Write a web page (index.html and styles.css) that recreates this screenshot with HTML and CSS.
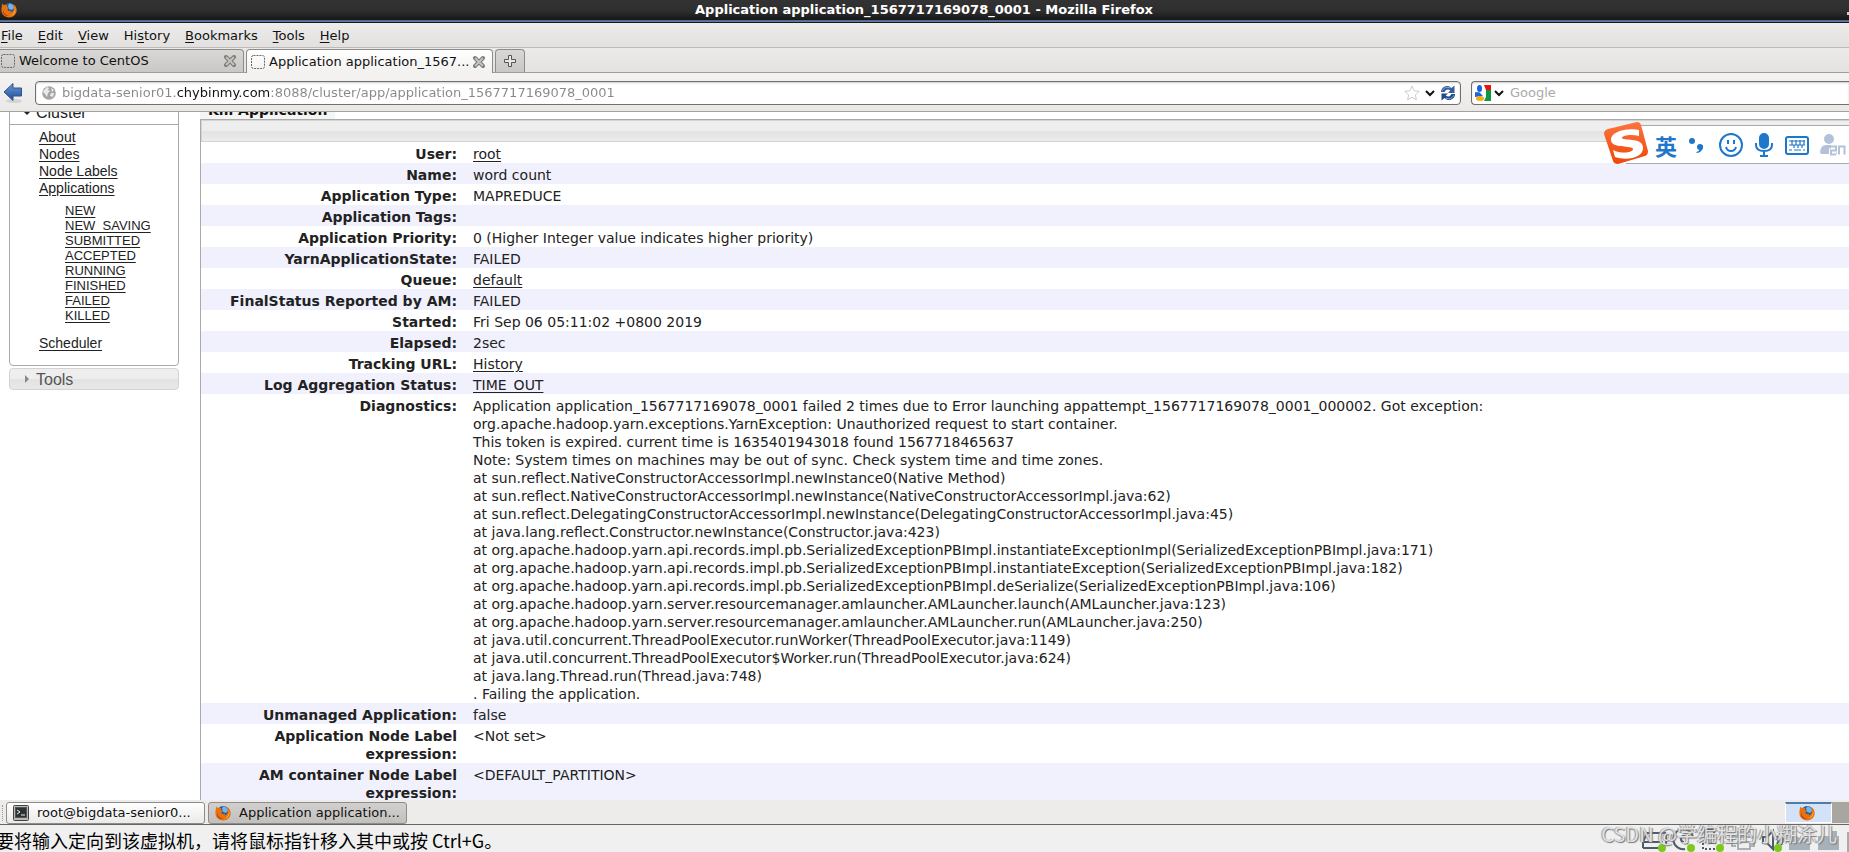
FILE: index.html
```html
<!DOCTYPE html>
<html lang="en">
<head>
<meta charset="utf-8">
<title>Application application_1567717169078_0001</title>
<link rel="stylesheet" href="styles.css">
</head>
<body>
<svg class="defs" aria-hidden="true">
  <defs>
    <linearGradient id="blueArrow" x1="0" y1="0" x2="0" y2="1"><stop offset="0" stop-color="#6c9bd2"/><stop offset="1" stop-color="#1f4b90"/></linearGradient>
    <linearGradient id="orange" x1="0" y1="0" x2="0" y2="1"><stop offset="0" stop-color="#fb7440"/><stop offset="1" stop-color="#f04708"/></linearGradient>
    <symbol id="fox" viewBox="0 0 16 16">
      <circle cx="8.2" cy="7.6" r="6.6" fill="#27599f"/>
      <path d="M8 1.500c3 0 5 2 5 4.500l-2 2-3-1-1-3z" fill="#6cb6e8"/>
      <path d="M1.200 1.500 3 3.300C4 2.600 5.400 2.700 6.400 3L5.800 5l2.400.8-1.800 1.400c.2 1.600 1.800 2.200 3.200 1.500 1 .1 1 .9-.6 1.600 2.400.2 4-1.500 4-4.300L11.500 2c2.700 1 4.300 3.200 4.200 6.300-.2 4.200-3.400 7.200-7.600 7.200C3.600 15.500.4 12.400.4 8.100c0-2.500.6-4.400.8-6.600z" fill="#e8700f"/>
      <path d="M13.400 4.600c1.400 3.900-.3 8-4.500 8.900 4.500.1 6.800-4.300 4.500-8.900z" fill="#ffcf3a"/>
      <path d="M2 8c.7 3.500 3 5.500 6 5.800C4 14.500 1.500 11.500 2 8z" fill="#b9330d"/>
    </symbol>
    <symbol id="page" viewBox="0 0 16 16"><rect x="1.500" y="1.500" width="13" height="13" rx="2" fill="none" stroke="#666" stroke-dasharray="2 1"/></symbol>
    <symbol id="cross" viewBox="0 0 14 14"><path d="M3 3l8 8M11 3l-8 8" stroke="#777873" stroke-width="4" stroke-linecap="round"/><path d="M3 3l8 8M11 3l-8 8" stroke="#c4c5c1" stroke-width="2"/></symbol>
    <symbol id="chev" viewBox="0 0 12 8"><path d="M2 2l4 4 4-4" fill="none" stroke="#111" stroke-width="2"/></symbol>
  </defs>
</svg>

<header class="titlebar">
  <svg class="i16"><use href="#fox"/></svg>
  <h1>Application application_1567717169078_0001 - Mozilla Firefox</h1>
  <button class="minimize" aria-label="Minimize"></button>
</header>

<nav class="menubar" aria-label="Menu">
  <button><u>F</u>ile</button><button><u>E</u>dit</button><button><u>V</u>iew</button><button>Hi<u>s</u>tory</button><button><u>B</u>ookmarks</button><button><u>T</u>ools</button><button><u>H</u>elp</button>
</nav>

<div class="tabs">
  <div class="tab"><svg class="i16"><use href="#page"/></svg><button class="tab-name">Welcome to CentOS</button><button class="close" aria-label="Close Welcome to CentOS"><svg class="i14"><use href="#cross"/></svg></button></div>
  <div class="tab tab-active"><svg class="i16"><use href="#page"/></svg><button class="tab-name">Application application_1567...</button><button class="close" aria-label="Close Application"><svg class="i14"><use href="#cross"/></svg></button></div>
  <button class="new-tab" aria-label="New tab"><svg class="i14" viewBox="0 0 14 14"><path d="M5.500 1.500h3v4h4v3h-4v4h-3v-4h-4v-3h4z" fill="#e8e8e6" stroke="#555"/></svg></button>
</div>

<div class="navbar">
  <button class="back" aria-label="Back"><svg viewBox="0 0 20 22"><ellipse cx="11" cy="19" rx="8" ry="2" fill="#d4d4d2"/><path d="M1 10 10 1.500V6h8.500v8H10v4.500z" fill="url(#blueArrow)" stroke="#2a5594"/></svg></button>
  <div class="field address">
    <svg class="i14" viewBox="0 0 14 14"><circle cx="7" cy="7" r="6.800" fill="#a5a5a5"/><path d="M2 4l3-3 2 1-1 2 2 1-2 2-1 4-2-3-2-2zM9 2l3 2-2 2zM9 7l3 0-1 4-3-1z" fill="#e9e9e9"/></svg>
    <input class="url" aria-label="Address" value="bigdata-senior01.chybinmy.com:8088/cluster/app/application_1567717169078_0001">
    <button aria-label="Bookmark"><svg class="i16" viewBox="0 0 16 16"><path d="M8 1l2.100 4.700 5.100.6-3.800 3.500 1 5L8 12.300l-4.400 2.500 1-5L.8 6.300l5.100-.6z" fill="#fff" stroke="#ccc"/></svg></button>
    <button aria-label="History"><svg class="chev"><use href="#chev"/></svg></button>
    <button aria-label="Reload"><svg class="i16" viewBox="0 0 16 16"><path d="M1 7C1 3 5 0 9 1.200L11.500 3 14.500.5V8H8l2.300-2.500C8 3.500 5.500 4.500 4.600 7z" fill="#355f9f"/><path d="M15 9c0 4-4 7-8 5.800L4.500 13l-3 2.500V8.500H8L5.700 10.500c2.300 2 4.800 1 5.700-1.500z" fill="#204a87"/><path d="M2.500 5.500C4 2.500 7 1.500 10 3M13.500 10.500c-1.500 3-4.500 4-7.500 2.500" fill="none" stroke="#8db0df"/></svg></button>
  </div>
  <div class="field search">
    <button aria-label="Search engine"><svg class="i16" viewBox="0 0 16 16"><path d="M9 0h7v5h-5z" fill="#e11"/><path d="M11 5h5v11H9l2-4z" fill="#109545"/><ellipse cx="4.500" cy="3.500" rx="2.500" ry="3.500" fill="#1765d8"/><path d="M0 7c3 1 4-1 6 2l2 2-8 1z" fill="#1765d8"/><ellipse cx="5" cy="13.500" rx="4" ry="2.500" fill="#f2af14"/></svg></button>
    <svg class="chev"><use href="#chev"/></svg>
    <input aria-label="Search" placeholder="Google">
  </div>
</div>

<main class="page">
  <aside class="sidebar">
    <section class="panel">
      <h3><svg class="tri" viewBox="0 0 8 8"><path d="M0 2h8L4 6z" fill="#222"/></svg>Cluster</h3>
      <ul>
        <li><a href="#">About</a></li>
        <li><a href="#">Nodes</a></li>
        <li><a href="#">Node Labels</a></li>
        <li><a href="#">Applications</a>
          <ul>
            <li><a href="#">NEW</a></li>
            <li><a href="#">NEW_SAVING</a></li>
            <li><a href="#">SUBMITTED</a></li>
            <li><a href="#">ACCEPTED</a></li>
            <li><a href="#">RUNNING</a></li>
            <li><a href="#">FINISHED</a></li>
            <li><a href="#">FAILED</a></li>
            <li><a href="#">KILLED</a></li>
          </ul>
        </li>
        <li><a href="#">Scheduler</a></li>
      </ul>
    </section>
    <h3 class="closed"><svg class="tri" viewBox="0 0 8 8"><path d="M2 0v8l4-4z" fill="#888"/></svg>Tools</h3>
  </aside>
  <div class="content">
    <button class="kill">Kill Application</button>
    <div class="info">
      <div class="info-head"></div>
      <table>
        <tr><th scope="row">User:</th><td><a href="#">root</a></td></tr>
        <tr><th scope="row">Name:</th><td>word count</td></tr>
        <tr><th scope="row">Application Type:</th><td>MAPREDUCE</td></tr>
        <tr><th scope="row">Application Tags:</th><td></td></tr>
        <tr><th scope="row">Application Priority:</th><td>0 (Higher Integer value indicates higher priority)</td></tr>
        <tr><th scope="row">YarnApplicationState:</th><td>FAILED</td></tr>
        <tr><th scope="row">Queue:</th><td><a href="#">default</a></td></tr>
        <tr><th scope="row">FinalStatus Reported by AM:</th><td>FAILED</td></tr>
        <tr><th scope="row">Started:</th><td>Fri Sep 06 05:11:02 +0800 2019</td></tr>
        <tr><th scope="row">Elapsed:</th><td>2sec</td></tr>
        <tr><th scope="row">Tracking URL:</th><td><a href="#">History</a></td></tr>
        <tr><th scope="row">Log Aggregation Status:</th><td><a href="#">TIME_OUT</a></td></tr>
        <tr><th scope="row">Diagnostics:</th><td>Application application_1567717169078_0001 failed 2 times due to Error launching appattempt_1567717169078_0001_000002. Got exception:<br>org.apache.hadoop.yarn.exceptions.YarnException: Unauthorized request to start container.<br>This token is expired. current time is 1635401943018 found 1567718465637<br>Note: System times on machines may be out of sync. Check system time and time zones.<br>at sun.reflect.NativeConstructorAccessorImpl.newInstance0(Native Method)<br>at sun.reflect.NativeConstructorAccessorImpl.newInstance(NativeConstructorAccessorImpl.java:62)<br>at sun.reflect.DelegatingConstructorAccessorImpl.newInstance(DelegatingConstructorAccessorImpl.java:45)<br>at java.lang.reflect.Constructor.newInstance(Constructor.java:423)<br>at org.apache.hadoop.yarn.api.records.impl.pb.SerializedExceptionPBImpl.instantiateExceptionImpl(SerializedExceptionPBImpl.java:171)<br>at org.apache.hadoop.yarn.api.records.impl.pb.SerializedExceptionPBImpl.instantiateException(SerializedExceptionPBImpl.java:182)<br>at org.apache.hadoop.yarn.api.records.impl.pb.SerializedExceptionPBImpl.deSerialize(SerializedExceptionPBImpl.java:106)<br>at org.apache.hadoop.yarn.server.resourcemanager.amlauncher.AMLauncher.launch(AMLauncher.java:123)<br>at org.apache.hadoop.yarn.server.resourcemanager.amlauncher.AMLauncher.run(AMLauncher.java:250)<br>at java.util.concurrent.ThreadPoolExecutor.runWorker(ThreadPoolExecutor.java:1149)<br>at java.util.concurrent.ThreadPoolExecutor$Worker.run(ThreadPoolExecutor.java:624)<br>at java.lang.Thread.run(Thread.java:748)<br>. Failing the application.</td></tr>
        <tr><th scope="row">Unmanaged Application:</th><td>false</td></tr>
        <tr><th scope="row">Application Node Label expression:</th><td>&lt;Not set&gt;</td></tr>
        <tr><th scope="row">AM container Node Label expression:</th><td>&lt;DEFAULT_PARTITION&gt;</td></tr>
      </table>
    </div>
  </div>
</main>

<footer class="taskbar">
  <span class="grip"></span>
  <button class="task"><svg class="i16" viewBox="0 0 16 16"><rect x=".5" y=".5" width="15" height="15" rx="1" fill="#babdb6" stroke="#444"/><rect x="2.500" y="2.500" width="11" height="10" fill="#2e3436" stroke="#555"/><path d="M4 5l3 2-3 2M8 10h4" fill="none" stroke="#eee"/></svg>root@bigdata-senior0...</button>
  <button class="task task-active"><svg class="i16"><use href="#fox"/></svg>Application application...</button>
  <div class="pager"><button class="desk desk-on" aria-label="Workspace 1"><svg class="i16"><use href="#fox"/></svg></button><button class="desk" aria-label="Workspace 2"></button></div>
</footer>

<div class="status">
  <p>要将输入定向到该虚拟机，请将鼠标指针移入其中或按 Ctrl+G。</p>
  <svg class="devices" viewBox="0 0 208 24" fill="none" stroke="#4c5c69" stroke-width="2">
    <path d="M5 5h20M2 20V14l4-9M2 14h20M2 20h16M25 5v12"/>
    <path d="M52 9A10 10 0 1 0 44 21M46 11a3 3 0 1 0-3 3"/>
    <path d="M64 2h9v9h-9zM69 11v4h6" /><path d="M62 11v10h14" stroke-dasharray="2 2"/>
    <path d="M97 9V4h12v5M95 18h-4V9h22v9h-4M97 14h12v7H97z" stroke="#a8b1b9"/>
    <path d="M122 9h4l6-6v18l-6-6h-4zM136 8q3 4 0 8M140 5q4 6 0 12"/>
    <path d="M148 8h8l2 2h11v12h-21zM177 8h14V3h5v5h2v14h-21z" fill="#a8b1b9" stroke="none"/>
    <path d="M207 4v20" stroke="#aaa"/>
    <g fill="#7ec81c" stroke="none"><circle cx="21" cy="20" r="4"/><circle cx="50" cy="20" r="4"/><circle cx="79" cy="20" r="4"/><circle cx="137" cy="20" r="4"/></g>
  </svg>
  <span class="watermark">CSDN @学编程的小糊涂儿</span>
</div>

<div class="ime">
  <svg class="ime-logo" viewBox="0 0 44 42"><path d="M4 7 33 0q3 0 4 3l7 26q0 4-3 5L14 42q-4 0-5-3L0 12q0-4 4-5z" fill="url(#orange)"/><path d="M35 8C27 6 7 8 7 18c0 9 22 5 22 9 0 4-12 5-20 1l2 7c12 4 29 1 28-10-1-10-21-6-21-9 0-3 10-4 17-2z" fill="#fff"/></svg>
  <span class="ime-lang">英</span>
  <svg class="i24" viewBox="0 0 24 24" fill="#1f77cb"><circle cx="6" cy="8" r="3"/><circle cx="14" cy="14" r="3"/><path d="M14.500 12q4-.5 2 4-2 4-6 4v-1q3-1 4-4z"/></svg>
  <svg class="i24" viewBox="0 0 24 24" fill="none" stroke="#1f77cb" stroke-width="2"><circle cx="12" cy="12" r="11"/><path d="M7 14q1 4 5 4t5-4M9 7v4M15 7v4"/></svg>
  <svg class="i24" viewBox="0 0 24 24" fill="none" stroke="#1f77cb" stroke-width="2"><rect x="8" y="1" width="8" height="14" rx="4" fill="#1f77cb"/><path d="M4 10v2q0 6 8 6t8-6v-2M12 18v5M8 23h8"/></svg>
  <svg class="i24" viewBox="0 0 24 24" fill="none" stroke="#1f77cb" stroke-width="2"><rect x="1" y="4" width="22" height="17" rx="2"/><path d="M4 8h16M4 12h16M4 17h3M9 17h7M18 17h2M7 7v5M11 7v5M15 7v5M19 7v5M9 12v3M13 12v3M17 12v3" stroke-width="1.200"/></svg>
  <svg class="i26" viewBox="0 0 26 24"><circle cx="9" cy="6" r="5" fill="#b3c1d9"/><path d="M0 19q1-8 7-7h7q3 1 3 9H3q-3 0-3-2z" fill="#b3c1d9"/><path d="M11 13.500h5v4h-5v4h5M19 21.500v-8h2M24 22v-8.500M18 21.500h4" fill="none" stroke="#fff" stroke-width="4"/><path d="M11 13.500h5v4h-5v4h5M19 21.500v-8h5.500v8" fill="none" stroke="#b3c1d9" stroke-width="2"/></svg>
</div>
</body>
</html>
```
FILE: styles.css
```css
* { box-sizing: border-box; }
html, body { height: 100%; margin: 0; }
body {
  display: flex;
  flex-direction: column;
  position: relative;
  overflow: hidden;
  background: #fff;
  color: #222;
  font: 13px/18px "DejaVu Sans", sans-serif;
}
button { margin: 0; padding: 0; border: 0; background: none; font: inherit; color: inherit; }
input { min-width: 0; padding: 0; border: 0; outline: 0; background: none; font: inherit; }
ul { margin: 0; padding: 0; list-style: none; }
a { color: inherit; text-underline-offset: 2px; }
svg { display: block; flex: none; }
.defs { position: absolute; width: 0; height: 0; }
.i14 { width: 14px; height: 14px; }
.i16 { width: 16px; height: 16px; }
.i24 { width: 24px; height: 24px; }
.i26 { width: 26px; height: 24px; }
.chev { width: 12px; height: 8px; }

.titlebar {
  display: flex;
  align-items: center;
  flex: none;
  height: 23px;
  padding: 0 0 3px 1px;
  background: linear-gradient(#333, #2e2e2e 11px, #171717 20px, #4b6384 20px, #6582a9 22px, #14171c 22px);
  color: #fff;
}
.titlebar h1 { flex: 1; margin: 0; padding-right: 16px; font-size: 13px; line-height: 18px; text-align: center; }
.minimize { width: 2px; height: 3px; margin-top: 6px; background: #ccc; }

.menubar {
  display: flex;
  flex: none;
  gap: 15px;
  height: 25px;
  padding: 2px 1px 0;
  border-bottom: 1px solid #bcbab8;
  background: linear-gradient(#edeceb, #e2e1df);
  color: #111;
}
.menubar u { text-underline-offset: 2px; }

.tabs {
  display: flex;
  align-items: flex-end;
  flex: none;
  gap: 2px;
  height: 25px;
  border-bottom: 1px solid #a09e9c;
  background: linear-gradient(#ebeae8, #e4e3e1);
  color: #111;
}
.tab, .new-tab {
  display: flex;
  align-items: center;
  height: 23px;
  border: 1px solid #8e8c8a;
  border-bottom: 0;
  border-radius: 4px 4px 0 0;
  background: linear-gradient(#d8d7d5, #c9c8c5);
}
.tab { width: 247px; padding: 0 6px 0 3px; gap: 3px; }
.tab:first-child { width: 244px; padding-left: 0; border-left: 0; border-top-left-radius: 0; }
.tab-active { height: 24px; margin-bottom: -1px; background: linear-gradient(#fff, #f2f1f0); }
.tab-name { flex: 1; text-align: left; white-space: nowrap; }
.new-tab { justify-content: center; width: 30px; }

.navbar {
  display: flex;
  align-items: center;
  flex: none;
  gap: 10px;
  height: 39px;
  padding: 1px 0 0 3px;
  border-bottom: 1px solid #a4a29f;
  background: linear-gradient(#f4f3f2, #eae9e7);
}
.back { width: 22px; padding-right: 2px; }
.field {
  display: flex;
  align-items: center;
  height: 24px;
  border: 1px solid #716f6c;
  border-radius: 4px;
  background: #fff;
  box-shadow: inset 0 1px 2px #ccc;
}
.address { flex: 1; padding: 0 4px 0 6px; gap: 4px; }
.address .url {
  flex: 1;
  margin-left: 2px;
  color: transparent;
  background: linear-gradient(90deg, #888 114px, #111 114px, #111 209px, #888 209px);
  -webkit-background-clip: text;
  background-clip: text;
}
.search { flex: 0 0 378px; padding-left: 3px; gap: 2px; border-right: 0; border-radius: 4px 0 0 4px; }
.search input { flex: 1; margin-left: 3px; }
.search input::placeholder { color: #aaa; opacity: 1; }

.page {
  display: flex;
  align-items: flex-start;
  flex: 1;
  min-height: 0;
  gap: 21px;
  overflow: hidden;
  padding-left: 9px;
}
.sidebar { flex: 0 0 170px; margin-top: -12px; font: 14px/17px "Liberation Sans", Arial, sans-serif; }
.sidebar h3 {
  display: flex;
  align-items: center;
  gap: 5px;
  height: 24px;
  margin: 0;
  padding-left: 13px;
  border-bottom: 1px solid #aaa;
  font-size: 16px;
  font-weight: 400;
}
.tri { width: 8px; height: 8px; }
.panel { padding-bottom: 13px; border: 1px solid #aaa; border-radius: 4px; }
.panel > ul { padding: 4px 0 0 29px; }
.panel ul ul { padding: 6px 0 12px 26px; font-size: 13px; line-height: 15px; }
.sidebar .closed {
  height: 22px;
  margin-top: 2px;
  border: 1px solid #d3d3d3;
  border-radius: 4px;
  background: linear-gradient(#eee 50%, #e2e2e2 50%, #e8e8e8);
  color: #555;
}

.content { flex: 1; min-width: 0; margin-top: -12px; font-size: 14px; }
.kill { display: block; height: 19px; padding: 0 8px; background: #f5f5f3; color: #111; font-weight: 700; }
.info { border: 1px solid #aaa; border-right: 0; }
.info-head {
  height: 22px;
  border: 1px solid #d3d3d3;
  border-right: 0;
  background: linear-gradient(#eee 50%, #e2e2e2 50%, #ececec);
}
table { width: 100%; border-collapse: collapse; table-layout: fixed; }
tr:nth-child(even) { background: #f1f1fe; }
th, td { padding: 3px 8px 0; vertical-align: top; text-align: left; }
th { width: 264px; text-align: right; }

.taskbar {
  display: flex;
  align-items: center;
  flex: none;
  gap: 3px;
  height: 25px;
  padding-top: 1px;
  border-bottom: 1px solid #686765;
  background: #edeceb;
  color: #111;
}
.grip { width: 3px; height: 16px; border-right: 1px dotted #999; }
.task {
  display: flex;
  align-items: center;
  gap: 8px;
  width: 199px;
  height: 22px;
  padding: 0 6px;
  border: 1px solid #8e8c8a;
  border-radius: 3px;
  background: linear-gradient(#fff, #ebeae9);
  white-space: nowrap;
}
.task-active { background: linear-gradient(#d2d0ce, #c2c0bd); }
.pager { display: flex; align-items: center; align-self: stretch; margin-left: auto; }
.desk { width: 17px; height: 21px; background: #a9a5a1; }
.desk-on { display: flex; align-items: center; justify-content: center; width: 47px; padding-right: 4px; border: 1px solid #fff; border-top: 2px solid #4a7db5; background: #d3e2f6; }

.status {
  display: flex;
  align-items: center;
  justify-content: space-between;
  flex: none;
  position: relative;
  height: 27px;
  overflow: hidden;
  background: #f0f0f0;
  color: #000;
}
.status p { margin: 0 0 0 -4px; padding-top: 3px; font: 18px/24px "Noto Sans CJK SC", sans-serif; white-space: nowrap; }
.devices { width: 208px; height: 24px; margin-top: 3px; }
.watermark {
  position: absolute;
  top: -4px;
  right: 12px;
  font: 20px/26px "Noto Sans CJK SC", sans-serif;
  color: rgba(240, 240, 240, .85);
  text-shadow: 1px 1px 1px #777, -1px 0 1px #999;
  white-space: nowrap;
}

.ime {
  position: absolute;
  top: 125px;
  right: 0;
  display: flex;
  align-items: center;
  gap: 9px;
  height: 39px;
  padding: 0 3px 0 0;
  border: 1px solid #aaa;
  border-width: 1px 0;
  background: #fff;
}
.ime .i26 { margin-left: 2px; }
.ime-logo { width: 44px; height: 42px; margin: -4px -2px 0 -22px; }
.ime-lang { font: 700 22px/26px "Noto Sans CJK SC", sans-serif; color: #1f77cb; }
```
